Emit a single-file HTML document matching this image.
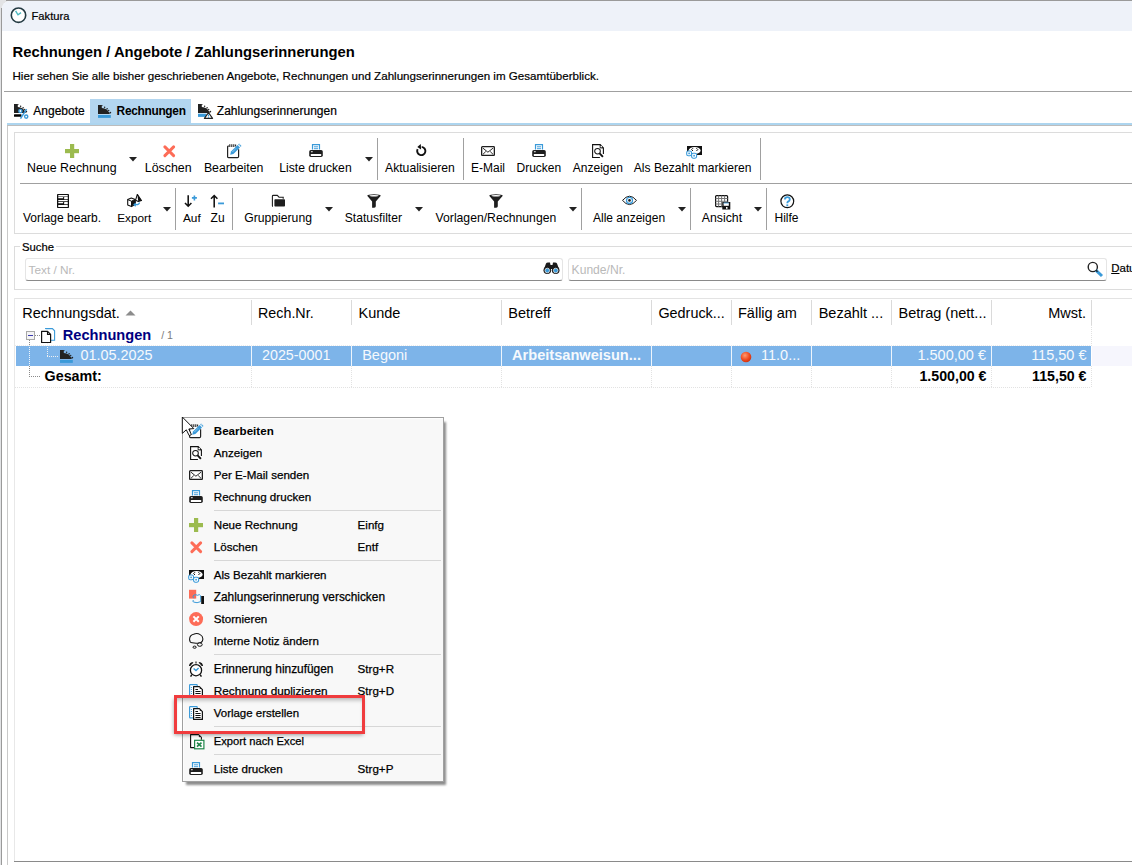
<!DOCTYPE html>
<html><head><meta charset="utf-8"><style>
html,body{margin:0;padding:0;width:1132px;height:865px;overflow:hidden;background:#fff}
body{position:relative;font-family:"Liberation Sans",sans-serif}
.a{position:absolute;display:block}
.t{position:absolute;white-space:nowrap;font-family:"Liberation Sans",sans-serif}
</style></head><body>
<div class="a" style="left:0px;top:0px;width:1132px;height:865px;background:#e2e3e5"></div>
<div class="a" style="left:2px;top:1px;width:1130px;height:864px;background:#fff;border-top-left-radius:8px"></div>
<div class="a" style="left:2px;top:1px;width:1130px;height:30px;background:#eef2f9;border-top-left-radius:8px"></div>
<div class="a" style="left:1px;top:8px;width:1px;height:857px;background:#9a9a9a"></div>
<div class="a" style="left:6px;top:0px;width:1126px;height:1px;background:#9a9a9a"></div>
<svg class="a" style="left:10px;top:7px" width="17" height="17" viewBox="0 0 17 17"><circle cx="8.5" cy="8.2" r="7.2" fill="#fff" stroke="#233a42" stroke-width="1.6"/><path d="M5.6 3.8 L8 7.8 L11 5.6" fill="none" stroke="#4bb8c0" stroke-width="1.4"/></svg>
<div class="t" style="left:31.5px;top:11px;font-size:11.2px;line-height:11.2px;font-weight:400;color:#000;-webkit-text-stroke:0.2px #000">Faktura</div>
<div class="t" style="left:12.5px;top:45px;font-size:14.8px;line-height:14.8px;font-weight:700;color:#000;">Rechnungen / Angebote / Zahlungserinnerungen</div>
<div class="t" style="left:12.5px;top:70px;font-size:11.6px;line-height:11.6px;font-weight:400;color:#000;-webkit-text-stroke:0.2px #000">Hier sehen Sie alle bisher geschriebenen Angebote, Rechnungen und Zahlungserinnerungen im Gesamtüberblick.</div>
<div class="a" style="left:4px;top:91px;width:1128px;height:1px;background:#a0a0a0"></div>
<div class="a" style="left:90px;top:99px;width:101px;height:24px;background:#b3d6f0"></div>
<div class="a" style="left:7px;top:123px;width:1125px;height:2px;background:#add5ef"></div>
<div class="a" style="left:7px;top:125px;width:1125px;height:1px;background:#bdbdbd"></div>
<svg class="a" style="left:14px;top:104px" width="16" height="16" viewBox="0 0 16 16"><path d="M0 0 H4.6 Q5 0 5 0.5 H3.8 V3.1 Q9.6 3.4 11.9 8.9 H0 Z" fill="#222"/><circle cx="6.6" cy="2.3" r="0.75" fill="#222"/><circle cx="9.1" cy="3.7" r="0.75" fill="#222"/><circle cx="10.7" cy="5.4" r="0.7" fill="#222"/><circle cx="12.3" cy="7.6" r="0.9" fill="#222"/><rect x="0" y="10.2" width="7.5" height="2.6" rx="0.5" fill="#000"/><circle cx="6.4" cy="7" r="1.6" fill="#fff" stroke="#3a9ad9" stroke-width="1.4"/><circle cx="12.2" cy="12.6" r="1.6" fill="#fff" stroke="#3a9ad9" stroke-width="1.4"/><path d="M12.6 5.2 L6.5 14.6" stroke="#3a9ad9" stroke-width="1.5"/></svg>
<div class="t" style="left:33.3px;top:105px;font-size:12px;line-height:12px;font-weight:400;color:#000;-webkit-text-stroke:0.2px #000">Angebote</div>
<svg class="a" style="left:98px;top:105px" width="14" height="14" viewBox="0 0 14 14"><path d="M0 0 H4.6 Q5 0 5 0.5 H3.8 V3.1 Q9.6 3.4 11.9 8.9 H0 Z" fill="#222"/><circle cx="6.6" cy="2.3" r="0.75" fill="#222"/><circle cx="9.1" cy="3.7" r="0.75" fill="#222"/><circle cx="10.7" cy="5.4" r="0.7" fill="#222"/><circle cx="12.3" cy="7.6" r="0.9" fill="#222"/><rect x="0" y="10" width="12.8" height="2.9" fill="#3a9ad9"/></svg>
<div class="t" style="left:116.6px;top:106px;font-size:11.9px;line-height:11.9px;font-weight:700;color:#000;letter-spacing:-0.3px">Rechnungen</div>
<svg class="a" style="left:198px;top:104px" width="16" height="16" viewBox="0 0 16 16"><path d="M0 0 H4.6 Q5 0 5 0.5 H3.8 V3.1 Q9.6 3.4 11.9 8.9 H0 Z" fill="#222"/><circle cx="6.6" cy="2.3" r="0.75" fill="#222"/><circle cx="9.1" cy="3.7" r="0.75" fill="#222"/><circle cx="10.7" cy="5.4" r="0.7" fill="#222"/><circle cx="12.3" cy="7.6" r="0.9" fill="#222"/><rect x="0" y="9.7" width="8.5" height="3.2" fill="#3a9ad9"/><path d="M10.5 8.6 L14.6 14.4 L6.4 14.4 Z" fill="#fff" stroke="#222" stroke-width="1.1" stroke-linejoin="round"/><path d="M10.5 10.4 V12.4 M10.5 13 V13.8" stroke="#3a9ad9" stroke-width="1.1"/></svg>
<div class="t" style="left:216.8px;top:105px;font-size:12px;line-height:12px;font-weight:400;color:#000;-webkit-text-stroke:0.2px #000">Zahlungserinnerungen</div>
<div class="a" style="left:7px;top:126px;width:1px;height:739px;background:#c9c9c9"></div>
<div class="a" style="left:14px;top:132px;width:1118px;height:102px;border:1px solid #dcdcdc;border-right:none;box-sizing:border-box;background:#fff"></div>
<div class="a" style="left:20px;top:183px;width:1112px;height:1px;background:#a0a0a0"></div>
<svg class="a" style="left:65px;top:144px" width="14" height="14" viewBox="0 0 14 14"><rect x="5" y="0" width="4.2" height="14" fill="#9cbb4f"/><rect x="0" y="5" width="14" height="4.2" fill="#9cbb4f"/></svg>
<div class="t" style="left:27.0px;top:162px;font-size:12.4px;line-height:12.4px;font-weight:400;color:#000;">Neue Rechnung</div>
<svg class="a" style="left:129px;top:157px" width="8" height="5" viewBox="0 0 8 5"><path d="M0 0 L8 0 L4 4.5 Z" fill="#222"/></svg>
<svg class="a" style="left:163px;top:145px" width="13" height="13" viewBox="0 0 13 13"><path d="M1.9 1.9 L10.6 10.6 M10.6 1.9 L1.9 10.6" stroke="#fd6c57" stroke-width="2.9" stroke-linecap="round"/></svg>
<div class="t" style="left:144.8px;top:162px;font-size:12.4px;line-height:12.4px;font-weight:400;color:#000;">Löschen</div>
<svg class="a" style="left:227px;top:143px" width="15" height="16" viewBox="0 0 15 16"><path d="M11.6 6.3 V13.5 Q11.6 14.6 10.5 14.6 H1.6 Q0.6 14.6 0.6 13.5 V4.1 Q0.6 3 1.7 3 H2" fill="#fff" stroke="#222" stroke-width="1.2"/><path d="M2.8 1.3 V4 M4.8 1.3 V4 M6.8 1.3 V4 M8.6 1.6 V3.6" stroke="#222" stroke-width="1.1"/><path d="M3.2 11.8 L4 8.6 L10.6 2 L13 4.4 L6.4 11 Z" fill="#3a9ad9"/><path d="M11.2 1.4 L12.1 0.5 L14.5 2.9 L13.6 3.8 Z" fill="#3a9ad9"/><path d="M5.6 8.8 L9.4 5" stroke="#fff" stroke-width="0.7" stroke-dasharray="0.9 0.8"/><rect x="12.2" y="1.5" width="1" height="1" fill="#fff" transform="rotate(45 12.7 2)"/></svg>
<div class="t" style="left:203.9px;top:162px;font-size:12.3px;line-height:12.3px;font-weight:400;color:#000;">Bearbeiten</div>
<svg class="a" style="left:309px;top:144px" width="14" height="14" viewBox="0 0 14 14"><path d="M3.5 5.6 V0.6 H10.5 V5.6" fill="#fff" stroke="#3a9ad9" stroke-width="1.15"/><path d="M5.3 2.8 H8.7 M5.3 4.7 H8.7" stroke="#3a9ad9" stroke-width="0.95" stroke-linecap="round"/><rect x="0.2" y="6" width="13.6" height="6.9" rx="1.7" fill="#1e1e1e"/><rect x="1.8" y="9.9" width="10.4" height="2.2" rx="0.6" fill="#fff"/><rect x="1.9" y="7.2" width="1.9" height="1" rx="0.4" fill="#fff"/></svg>
<div class="t" style="left:279.2px;top:162px;font-size:12.2px;line-height:12.2px;font-weight:400;color:#000;">Liste drucken</div>
<svg class="a" style="left:365px;top:157px" width="8" height="5" viewBox="0 0 8 5"><path d="M0 0 L8 0 L4 4.5 Z" fill="#222"/></svg>
<div class="a" style="left:377px;top:138px;width:1px;height:42px;background:#a0a0a0"></div>
<svg class="a" style="left:415px;top:143px" width="12" height="14" viewBox="0 0 12 14"><path d="M6.7 3.9 A4.1 4.1 0 1 1 2.6 6.2" fill="none" stroke="#111" stroke-width="1.9"/><path d="M2.3 3.9 L5.8 1 L6.1 6.6 Z" fill="#111"/></svg>
<div class="t" style="left:385.0px;top:162px;font-size:12.2px;line-height:12.2px;font-weight:400;color:#000;">Aktualisieren</div>
<div class="a" style="left:463px;top:138px;width:1px;height:42px;background:#a0a0a0"></div>
<svg class="a" style="left:481px;top:146px" width="14" height="10" viewBox="0 0 14 10"><rect x="0.65" y="0.65" width="12.7" height="8.8" rx="0.8" fill="#fff" stroke="#1e1e1e" stroke-width="1.3"/><path d="M1.9 2.1 L6.9 6.2 L12.1 2.1 M1.9 8.4 L4.8 5.5 M12.1 8.4 L9.2 5.5" fill="none" stroke="#1e1e1e" stroke-width="0.95"/></svg>
<div class="t" style="left:471.0px;top:162px;font-size:12px;line-height:12px;font-weight:400;color:#000;">E-Mail</div>
<svg class="a" style="left:532px;top:144px" width="14" height="14" viewBox="0 0 14 14"><path d="M3.5 5.6 V0.6 H10.5 V5.6" fill="#fff" stroke="#3a9ad9" stroke-width="1.15"/><path d="M5.3 2.8 H8.7 M5.3 4.7 H8.7" stroke="#3a9ad9" stroke-width="0.95" stroke-linecap="round"/><rect x="0.2" y="6" width="13.6" height="6.9" rx="1.7" fill="#1e1e1e"/><rect x="1.8" y="9.9" width="10.4" height="2.2" rx="0.6" fill="#fff"/><rect x="1.9" y="7.2" width="1.9" height="1" rx="0.4" fill="#fff"/></svg>
<div class="t" style="left:516.5px;top:162px;font-size:12px;line-height:12px;font-weight:400;color:#000;">Drucken</div>
<svg class="a" style="left:592px;top:144px" width="13" height="14" viewBox="0 0 13 14"><path d="M11.4 10 V4 L8.2 0.6 H0.6 V13.5 H7.9" fill="#fff" stroke="#111" stroke-width="1.1"/><path d="M8.2 0.8 V3.9 H11.3" fill="none" stroke="#111" stroke-width="1"/><circle cx="9.3" cy="2.4" r="0.7" fill="#fff"/><circle cx="5.5" cy="7.2" r="2.8" fill="#fff" stroke="#111" stroke-width="1.05"/><path d="M7.6 9.3 L10.9 12.8" stroke="#111" stroke-width="1.9"/></svg>
<div class="t" style="left:572.8px;top:162px;font-size:12px;line-height:12px;font-weight:400;color:#000;">Anzeigen</div>
<svg class="a" style="left:686px;top:146px" width="17" height="13" viewBox="0 0 17 13"><rect x="1" y="0" width="15" height="9" fill="#111"/><ellipse cx="8.6" cy="4.5" rx="6" ry="3.6" fill="#fff"/><path d="M7 2.2 L5.6 3.6 L7 5 M10.4 2.2 L11.8 3.6 L10.4 5" fill="none" stroke="#111" stroke-width="1"/><rect x="0.7" y="5" width="4.8" height="4.8" rx="1.6" fill="#fff" stroke="#3a9ad9" stroke-width="1.1"/><rect x="2.3" y="6.6" width="1.6" height="1.6" fill="#3a9ad9"/><rect x="5.6" y="7.2" width="5" height="5" rx="1.6" fill="#fff" stroke="#3a9ad9" stroke-width="1.1"/><rect x="7.3" y="8.9" width="1.6" height="1.6" fill="#3a9ad9"/></svg>
<div class="t" style="left:633.8px;top:162px;font-size:12.1px;line-height:12.1px;font-weight:400;color:#000;">Als Bezahlt markieren</div>
<div class="a" style="left:760px;top:138px;width:1px;height:42px;background:#a0a0a0"></div>
<svg class="a" style="left:57px;top:194px" width="12" height="14" viewBox="0 0 12 14"><rect x="0" y="0" width="12" height="14" rx="0.8" fill="#111"/><rect x="1.2" y="1.1" width="9.6" height="1.3" rx="0.5" fill="#fff"/><rect x="1.2" y="3.1" width="5" height="1.2" rx="0.5" fill="#fff"/><rect x="7.1" y="3.1" width="3.7" height="2.2" rx="0.5" fill="#fff"/><rect x="1.2" y="6.1" width="9.6" height="1.2" rx="0.5" fill="#fff"/><rect x="1.2" y="8.1" width="5" height="1.2" rx="0.5" fill="#fff"/><rect x="7.1" y="8.1" width="3.7" height="2.2" rx="0.5" fill="#fff"/><rect x="1.2" y="11" width="9.6" height="2" rx="0.5" fill="#fff"/></svg>
<div class="t" style="left:23.0px;top:212px;font-size:12px;line-height:12px;font-weight:400;color:#000;">Vorlage bearb.</div>
<svg class="a" style="left:127px;top:194px" width="16" height="15" viewBox="0 0 16 15"><path d="M0.7 5.6 L4.3 4 L8.3 5.4 V10.3 L4.5 12.6 L0.7 11 Z" fill="#fff" stroke="#111" stroke-width="1.1" stroke-linejoin="round"/><path d="M0.7 5.6 L4.5 7.2 L8.3 5.4 M4.5 7.2 V12.6" fill="none" stroke="#111" stroke-width="1"/><path d="M4.5 7.2 L8.3 5.4 V10.3 L4.5 12.6 Z" fill="#111"/><path d="M10.3 0.3 L14.5 6.6 L11.3 7.5 L8.6 6.2 Z" fill="#fff" stroke="#111" stroke-width="1.05" stroke-linejoin="round"/><path d="M10.3 0.3 L14.5 6.6 L11.3 7.5 Z" fill="#111"/><path d="M12.4 8.4 Q12.4 10.6 9.2 10.7 H7.2 M8.7 9.1 L7 10.7 L8.7 12.3" fill="none" stroke="#3a9ad9" stroke-width="1.2"/></svg>
<div class="t" style="left:117.2px;top:213px;font-size:11.8px;line-height:11.8px;font-weight:400;color:#000;">Export</div>
<svg class="a" style="left:163px;top:207px" width="8" height="5" viewBox="0 0 8 5"><path d="M0 0 L8 0 L4 4.5 Z" fill="#222"/></svg>
<div class="a" style="left:175px;top:188px;width:1px;height:42px;background:#a0a0a0"></div>
<svg class="a" style="left:184px;top:195px" width="16" height="13" viewBox="0 0 16 13"><path d="M4.2 0.2 V11 M1 8 L4.2 11.2 L7.4 8" fill="none" stroke="#111" stroke-width="1.55"/><path d="M10.4 0.4 V5.4 M7.9 2.9 H12.9" stroke="#3a9ad9" stroke-width="1.6"/></svg>
<div class="t" style="left:183.0px;top:213px;font-size:11.8px;line-height:11.8px;font-weight:400;color:#000;">Auf</div>
<svg class="a" style="left:210px;top:194px" width="16" height="14" viewBox="0 0 16 14"><path d="M4.2 13.6 V1.5 M1 4.7 L4.2 1.5 L7.4 4.7" fill="none" stroke="#111" stroke-width="1.55"/><path d="M8.1 9.4 H14" stroke="#3a9ad9" stroke-width="1.8"/></svg>
<div class="t" style="left:210.6px;top:212px;font-size:12px;line-height:12px;font-weight:400;color:#000;">Zu</div>
<div class="a" style="left:232px;top:188px;width:1px;height:42px;background:#a0a0a0"></div>
<svg class="a" style="left:271px;top:194px" width="16" height="14" viewBox="0 0 16 14"><path d="M2 12.4 Q1.4 12.4 1.4 11.6 V2.3 Q1.4 1.4 2.3 1.4 H6.3 L8 3.2 H12.2 V4.7" fill="none" stroke="#1e1e1e" stroke-width="1.1"/><rect x="3.4" y="5.2" width="10.6" height="7.4" rx="0.8" fill="#1e1e1e"/></svg>
<div class="t" style="left:244.2px;top:212px;font-size:12.2px;line-height:12.2px;font-weight:400;color:#000;">Gruppierung</div>
<svg class="a" style="left:325px;top:207px" width="8" height="5" viewBox="0 0 8 5"><path d="M0 0 L8 0 L4 4.5 Z" fill="#222"/></svg>
<svg class="a" style="left:367px;top:194px" width="14" height="14" viewBox="0 0 14 14"><path d="M0.2 1.8 Q0.2 0.2 7 0.2 Q13.8 0.2 13.8 1.8 L8.8 7.6 V12.2 Q8.8 13.4 7.2 13.8 L5.1 13.8 V7.6 Z" fill="#1e1e1e"/><ellipse cx="7" cy="1.7" rx="4.6" ry="0.75" fill="#fff"/></svg>
<div class="t" style="left:344.8px;top:212px;font-size:12.1px;line-height:12.1px;font-weight:400;color:#000;">Statusfilter</div>
<svg class="a" style="left:415px;top:207px" width="8" height="5" viewBox="0 0 8 5"><path d="M0 0 L8 0 L4 4.5 Z" fill="#222"/></svg>
<svg class="a" style="left:489px;top:194px" width="14" height="14" viewBox="0 0 14 14"><path d="M0.2 1.8 Q0.2 0.2 7 0.2 Q13.8 0.2 13.8 1.8 L8.8 7.6 V12.2 Q8.8 13.4 7.2 13.8 L5.1 13.8 V7.6 Z" fill="#1e1e1e"/><ellipse cx="7" cy="1.7" rx="4.6" ry="0.75" fill="#fff"/></svg>
<div class="t" style="left:435.6px;top:212px;font-size:12.2px;line-height:12.2px;font-weight:400;color:#000;">Vorlagen/Rechnungen</div>
<svg class="a" style="left:569px;top:207px" width="8" height="5" viewBox="0 0 8 5"><path d="M0 0 L8 0 L4 4.5 Z" fill="#222"/></svg>
<div class="a" style="left:581px;top:188px;width:1px;height:42px;background:#a0a0a0"></div>
<svg class="a" style="left:622px;top:195px" width="15" height="11" viewBox="0 0 15 11"><path d="M0.5 5.4 Q7.5 -3 14.5 5.4 Q7.5 13.8 0.5 5.4 Z" fill="#fff" stroke="#1e1e1e" stroke-width="1"/><circle cx="7.5" cy="5.4" r="3" fill="none" stroke="#3a9ad9" stroke-width="1.3"/><circle cx="7.5" cy="5.4" r="1.3" fill="#1e1e1e"/></svg>
<div class="t" style="left:593.0px;top:212px;font-size:12px;line-height:12px;font-weight:400;color:#000;">Alle anzeigen</div>
<svg class="a" style="left:678px;top:207px" width="8" height="5" viewBox="0 0 8 5"><path d="M0 0 L8 0 L4 4.5 Z" fill="#222"/></svg>
<div class="a" style="left:690px;top:188px;width:1px;height:42px;background:#a0a0a0"></div>
<svg class="a" style="left:715px;top:195px" width="16" height="15" viewBox="0 0 16 15"><rect x="0.6" y="0.6" width="12" height="11" rx="1" fill="#fff" stroke="#111" stroke-width="1.2"/><path d="M0.6 3.5 H12.6 M0.6 6.3 H12.6 M0.6 9 H12.6 M3.6 0.6 V11.6 M6.6 0.6 V11.6 M9.6 0.6 V11.6" stroke="#777" stroke-width="1"/><rect x="7.3" y="7" width="8" height="7.5" fill="#111"/><rect x="8.6" y="7.8" width="5.2" height="3" fill="#fff"/><rect x="8.6" y="7.6" width="5.2" height="0.8" fill="#3a9ad9"/><rect x="11" y="12" width="1.5" height="1.8" fill="#fff"/></svg>
<div class="t" style="left:701.8px;top:212px;font-size:12.3px;line-height:12.3px;font-weight:400;color:#000;">Ansicht</div>
<svg class="a" style="left:754px;top:207px" width="8" height="5" viewBox="0 0 8 5"><path d="M0 0 L8 0 L4 4.5 Z" fill="#222"/></svg>
<div class="a" style="left:766px;top:188px;width:1px;height:42px;background:#a0a0a0"></div>
<svg class="a" style="left:780px;top:194px" width="15" height="15" viewBox="0 0 15 15"><circle cx="7.3" cy="7.3" r="6.4" fill="#fff" stroke="#111" stroke-width="1.2"/><path d="M4.9 5.6 Q4.9 3.2 7.3 3.2 Q9.8 3.2 9.8 5.4 Q9.8 6.8 8 7.6 Q7.3 8 7.3 9.3" fill="none" stroke="#3a9ad9" stroke-width="1.8"/><rect x="6.4" y="10.4" width="1.8" height="1.8" fill="#3a9ad9"/></svg>
<div class="t" style="left:774.5px;top:212px;font-size:12px;line-height:12px;font-weight:400;color:#000;">Hilfe</div>
<div class="a" style="left:14px;top:246px;width:1118px;height:44px;border:1px solid #dcdcdc;border-right:none;box-sizing:border-box"></div>
<div class="a" style="left:20px;top:240px;width:36px;height:12px;background:#fff"></div>
<div class="t" style="left:22.0px;top:242px;font-size:11.3px;line-height:11.3px;font-weight:400;color:#000;-webkit-text-stroke:0.2px #000">Suche</div>
<div class="a" style="left:25px;top:258px;width:538px;height:23px;border:1px solid #e5e5e5;border-bottom:1px solid #8a8a8a;border-radius:3px;box-sizing:border-box;background:#fff"></div>
<div class="t" style="left:28.6px;top:265px;font-size:11.8px;line-height:11.8px;font-weight:400;color:#b9b9b9;">Text / Nr.</div>
<svg class="a" style="left:543px;top:262px" width="17" height="13" viewBox="0 0 17 13"><path d="M3 1.5 Q3.5 0.5 5 0.5 L7 0.5 L7.5 3 L9.5 3 L10 0.5 L12 0.5 Q13.5 0.5 14 1.5 L16 7 L1 7 Z" fill="#1a1a1a"/><circle cx="4.3" cy="8.3" r="3.8" fill="#1a1a1a"/><circle cx="12.7" cy="8.3" r="3.8" fill="#1a1a1a"/><circle cx="4.3" cy="8.5" r="2.3" fill="#3a9ad9"/><circle cx="12.7" cy="8.5" r="2.3" fill="#3a9ad9"/><circle cx="4.3" cy="8.5" r="2.3" fill="none" stroke="#fff" stroke-width="0.7"/><circle cx="12.7" cy="8.5" r="2.3" fill="none" stroke="#fff" stroke-width="0.7"/></svg>
<div class="a" style="left:568px;top:258px;width:539px;height:23px;border:1px solid #e5e5e5;border-bottom:1px solid #8a8a8a;border-radius:3px;box-sizing:border-box;background:#fff"></div>
<div class="t" style="left:571.6px;top:264px;font-size:12.1px;line-height:12.1px;font-weight:400;color:#b9b9b9;">Kunde/Nr.</div>
<svg class="a" style="left:1087px;top:261px" width="17" height="17" viewBox="0 0 17 17"><circle cx="5.8" cy="6" r="4.6" fill="none" stroke="#222" stroke-width="1.4"/><path d="M9 9.3 L15 15" stroke="#3a9ad9" stroke-width="3"/><path d="M9 9.3 L10.5 10.8" stroke="#222" stroke-width="1.4"/></svg>
<div class="t" style="left:1111.2px;top:263px;font-size:11.5px;line-height:11.5px;font-weight:400;color:#000;-webkit-text-stroke:0.2px #000"><span style="text-decoration:underline">D</span>atum</div>
<div class="a" style="left:14px;top:298px;width:1118px;height:1px;background:#e3e3e3"></div>
<div class="a" style="left:14px;top:298px;width:1px;height:564px;background:#e8e8e8"></div>
<div class="a" style="left:14px;top:861px;width:1118px;height:1px;background:#8a8a8a"></div>
<div class="a" style="left:251px;top:300px;width:1px;height:25px;background:#dadada"></div>
<div class="a" style="left:351px;top:300px;width:1px;height:25px;background:#dadada"></div>
<div class="a" style="left:501px;top:300px;width:1px;height:25px;background:#dadada"></div>
<div class="a" style="left:651px;top:300px;width:1px;height:25px;background:#dadada"></div>
<div class="a" style="left:731px;top:300px;width:1px;height:25px;background:#dadada"></div>
<div class="a" style="left:811px;top:300px;width:1px;height:25px;background:#dadada"></div>
<div class="a" style="left:891px;top:300px;width:1px;height:25px;background:#dadada"></div>
<div class="a" style="left:991px;top:300px;width:1px;height:25px;background:#dadada"></div>
<div class="a" style="left:1091px;top:300px;width:1px;height:25px;background:#dadada"></div>
<div class="t" style="left:22.3px;top:306px;font-size:14.5px;line-height:14.5px;font-weight:400;color:#000;">Rechnungsdat.</div>
<svg class="a" style="left:125px;top:310px" width="11" height="6" viewBox="0 0 11 6"><path d="M0.5 5.5 L5.5 0.5 L10.5 5.5 Z" fill="#8c8c8c"/></svg>
<div class="t" style="left:258.0px;top:306px;font-size:14.3px;line-height:14.3px;font-weight:400;color:#000;">Rech.Nr.</div>
<div class="t" style="left:358.5px;top:306px;font-size:14.5px;line-height:14.5px;font-weight:400;color:#000;">Kunde</div>
<div class="t" style="left:508.3px;top:306px;font-size:14.5px;line-height:14.5px;font-weight:400;color:#000;">Betreff</div>
<div class="t" style="left:658.4px;top:306px;font-size:14.4px;line-height:14.4px;font-weight:400;color:#000;">Gedruck...</div>
<div class="t" style="left:738.0px;top:306px;font-size:14.5px;line-height:14.5px;font-weight:400;color:#000;">Fällig am</div>
<div class="t" style="left:818.7px;top:306px;font-size:14.5px;line-height:14.5px;font-weight:400;color:#000;">Bezahlt ...</div>
<div class="t" style="left:898.6px;top:306px;font-size:14.5px;line-height:14.5px;font-weight:400;color:#000;">Betrag (nett...</div>
<div class="t" style="left:886px;width:200px;text-align:right;top:306px;font-size:14.5px;line-height:14.5px;font-weight:400;color:#000">Mwst.</div>
<div class="a" style="left:251px;top:366px;width:1px;height:21px;background-image:linear-gradient(#e2e2e2 50%, transparent 50%);background-size:1px 2px"></div>
<div class="a" style="left:351px;top:366px;width:1px;height:21px;background-image:linear-gradient(#e2e2e2 50%, transparent 50%);background-size:1px 2px"></div>
<div class="a" style="left:501px;top:366px;width:1px;height:21px;background-image:linear-gradient(#e2e2e2 50%, transparent 50%);background-size:1px 2px"></div>
<div class="a" style="left:651px;top:366px;width:1px;height:21px;background-image:linear-gradient(#e2e2e2 50%, transparent 50%);background-size:1px 2px"></div>
<div class="a" style="left:731px;top:366px;width:1px;height:21px;background-image:linear-gradient(#e2e2e2 50%, transparent 50%);background-size:1px 2px"></div>
<div class="a" style="left:811px;top:366px;width:1px;height:21px;background-image:linear-gradient(#e2e2e2 50%, transparent 50%);background-size:1px 2px"></div>
<div class="a" style="left:891px;top:366px;width:1px;height:21px;background-image:linear-gradient(#e2e2e2 50%, transparent 50%);background-size:1px 2px"></div>
<div class="a" style="left:991px;top:366px;width:1px;height:21px;background-image:linear-gradient(#e2e2e2 50%, transparent 50%);background-size:1px 2px"></div>
<div class="a" style="left:1091px;top:366px;width:1px;height:21px;background-image:linear-gradient(#e2e2e2 50%, transparent 50%);background-size:1px 2px"></div>
<div class="a" style="left:15px;top:387px;width:1076px;height:1px;background-image:linear-gradient(90deg,#e2e2e2 50%, transparent 50%);background-size:2px 1px"></div>
<div class="a" style="left:15px;top:345px;width:1076px;height:1px;background-image:linear-gradient(90deg,#ebebeb 50%, transparent 50%);background-size:2px 1px"></div>
<div class="a" style="left:16px;top:346px;width:1075px;height:20px;background:#7db4e9"></div>
<div class="a" style="left:1092px;top:346px;width:40px;height:20px;background:#f6f6fd"></div>
<div class="a" style="left:1091px;top:325px;width:1px;height:21px;background-image:linear-gradient(#e2e2e2 50%, transparent 50%);background-size:1px 2px"></div>
<div class="a" style="left:251px;top:346px;width:1px;height:20px;background:#eef5fc"></div>
<div class="a" style="left:351px;top:346px;width:1px;height:20px;background:#eef5fc"></div>
<div class="a" style="left:501px;top:346px;width:1px;height:20px;background:#eef5fc"></div>
<div class="a" style="left:651px;top:346px;width:1px;height:20px;background:#eef5fc"></div>
<div class="a" style="left:731px;top:346px;width:1px;height:20px;background:#eef5fc"></div>
<div class="a" style="left:811px;top:346px;width:1px;height:20px;background:#eef5fc"></div>
<div class="a" style="left:891px;top:346px;width:1px;height:20px;background:#eef5fc"></div>
<div class="a" style="left:991px;top:346px;width:1px;height:20px;background:#eef5fc"></div>
<div class="a" style="left:29px;top:340px;width:1px;height:37px;background-image:linear-gradient(#8a8a8a 50%, transparent 50%);background-size:1px 2px"></div>
<div class="a" style="left:29px;top:346px;width:1px;height:20px;background-image:linear-gradient(#7db4e9 50%, #f2f7fc 50%);background-size:1px 2px"></div>
<div class="a" style="left:29px;top:376px;width:11px;height:1px;background-image:linear-gradient(90deg,#8a8a8a 50%, transparent 50%);background-size:2px 1px"></div>
<div class="a" style="left:35px;top:335px;width:6px;height:1px;background-image:linear-gradient(90deg,#8a8a8a 50%, transparent 50%);background-size:2px 1px"></div>
<div class="a" style="left:47px;top:343px;width:1px;height:14px;background-image:linear-gradient(#f0f0f0 50%, transparent 50%);background-size:1px 2px"></div>
<div class="a" style="left:47px;top:356px;width:12px;height:1px;background-image:linear-gradient(90deg,#f0f0f0 50%, transparent 50%);background-size:2px 1px"></div>
<svg class="a" style="left:26px;top:331px" width="9" height="9" viewBox="0 0 9 9"><rect x="0.5" y="0.5" width="8" height="8" fill="#f4f4f4" stroke="#a8a8a8"/><path d="M2 4.5 H7" stroke="#3b3bb0" stroke-width="1"/></svg>
<svg class="a" style="left:41px;top:328px" width="15" height="16" viewBox="0 0 15 16"><path d="M4.6 1 V0.6 H11.4 L13.6 2.8 V12.3 H10" fill="#fff" stroke="#3a9ad9" stroke-width="1.1"/><path d="M0.6 3.3 H6.6 L9.6 6.3 V14.5 H0.6 Z" fill="#fff" stroke="#111" stroke-width="1.2" stroke-linejoin="round"/><path d="M6.5 3.4 V6.4 H9.5" fill="none" stroke="#111" stroke-width="1.1"/></svg>
<div class="t" style="left:62.8px;top:328px;font-size:14.6px;line-height:14.6px;font-weight:700;color:#000080;">Rechnungen</div>
<div class="t" style="left:161.2px;top:330px;font-size:10.6px;line-height:10.6px;font-weight:400;color:#7a7a7a;">/ 1</div>
<svg class="a" style="left:60px;top:350px" width="14" height="15" viewBox="0 0 14 15"><path d="M0 0 H4.6 Q5 0 5 0.5 H3.8 V3.1 Q9.6 3.4 11.9 8.9 H0 Z" fill="#222"/><circle cx="6.6" cy="2.3" r="0.75" fill="#222"/><circle cx="9.1" cy="3.7" r="0.75" fill="#222"/><circle cx="10.7" cy="5.4" r="0.7" fill="#222"/><circle cx="12.3" cy="7.6" r="0.9" fill="#222"/><rect x="0" y="10" width="12.8" height="2.9" fill="#3a9ad9"/></svg>
<div class="t" style="left:80.5px;top:348px;font-size:14.4px;line-height:14.4px;font-weight:400;color:#f5f9fd;">01.05.2025</div>
<div class="t" style="left:262.0px;top:348px;font-size:14.3px;line-height:14.3px;font-weight:400;color:#f5f9fd;">2025-0001</div>
<div class="t" style="left:362.2px;top:348px;font-size:14.5px;line-height:14.5px;font-weight:400;color:#f5f9fd;">Begoni</div>
<div class="t" style="left:512.0px;top:348px;font-size:14.6px;line-height:14.6px;font-weight:700;color:#f5f9fd;">Arbeitsanweisun...</div>
<svg class="a" style="left:740px;top:351px" width="12" height="12" viewBox="0 0 12 12"><defs><radialGradient id="rg" cx="0.4" cy="0.35" r="0.7"><stop offset="0" stop-color="#ff9a70"/><stop offset="0.6" stop-color="#f04a20"/><stop offset="1" stop-color="#c83010"/></radialGradient></defs><circle cx="6" cy="6" r="5.3" fill="url(#rg)"/></svg>
<div class="t" style="left:761.0px;top:348px;font-size:14.5px;line-height:14.5px;font-weight:400;color:#f5f9fd;">11.0...</div>
<div class="t" style="left:786px;width:200px;text-align:right;top:348px;font-size:14.5px;line-height:14.5px;font-weight:400;color:#f5f9fd">1.500,00 €</div>
<div class="t" style="left:886.5px;width:200px;text-align:right;top:348px;font-size:14.5px;line-height:14.5px;font-weight:400;color:#f5f9fd">115,50 €</div>
<div class="t" style="left:44.6px;top:369px;font-size:14.3px;line-height:14.3px;font-weight:700;color:#000;">Gesamt:</div>
<div class="t" style="left:786.5px;width:200px;text-align:right;top:369px;font-size:14.2px;line-height:14.2px;font-weight:700;color:#000">1.500,00 €</div>
<div class="t" style="left:886.5px;width:200px;text-align:right;top:369px;font-size:14.2px;line-height:14.2px;font-weight:700;color:#000">115,50 €</div>
<div class="a" style="left:186px;top:422px;width:260px;height:363px;background:rgba(0,0,0,0.45);filter:blur(0.9px)"></div>
<div class="a" style="left:182px;top:417px;width:262px;height:365px;background:#f8f8f8;border:1px solid #a0a0a0;box-sizing:border-box;box-shadow:inset 1px 1px 0 #fdfdfd"></div>
<div class="t" style="left:213.8px;top:425px;font-size:11.6px;line-height:11.6px;font-weight:700;color:#000;">Bearbeiten</div>
<div class="t" style="left:213.8px;top:447px;font-size:11.6px;line-height:11.6px;font-weight:400;color:#000;-webkit-text-stroke:0.25px #000">Anzeigen</div>
<div class="t" style="left:213.8px;top:469px;font-size:11.6px;line-height:11.6px;font-weight:400;color:#000;-webkit-text-stroke:0.25px #000">Per E-Mail senden</div>
<div class="t" style="left:213.8px;top:491px;font-size:11.6px;line-height:11.6px;font-weight:400;color:#000;-webkit-text-stroke:0.25px #000">Rechnung drucken</div>
<div class="t" style="left:213.8px;top:519px;font-size:11.6px;line-height:11.6px;font-weight:400;color:#000;-webkit-text-stroke:0.25px #000">Neue Rechnung</div>
<div class="t" style="left:357.6px;top:519px;font-size:11.6px;line-height:11.6px;font-weight:400;color:#000;-webkit-text-stroke:0.25px #000">Einfg</div>
<div class="t" style="left:213.8px;top:541px;font-size:11.6px;line-height:11.6px;font-weight:400;color:#000;-webkit-text-stroke:0.25px #000">Löschen</div>
<div class="t" style="left:357.6px;top:541px;font-size:11.6px;line-height:11.6px;font-weight:400;color:#000;-webkit-text-stroke:0.25px #000">Entf</div>
<div class="t" style="left:213.8px;top:569px;font-size:11.6px;line-height:11.6px;font-weight:400;color:#000;-webkit-text-stroke:0.25px #000">Als Bezahlt markieren</div>
<div class="t" style="left:213.8px;top:592px;font-size:11.85px;line-height:11.85px;font-weight:400;color:#000;-webkit-text-stroke:0.25px #000">Zahlungserinnerung verschicken</div>
<div class="t" style="left:213.8px;top:613px;font-size:11.6px;line-height:11.6px;font-weight:400;color:#000;-webkit-text-stroke:0.25px #000">Stornieren</div>
<div class="t" style="left:213.8px;top:635px;font-size:11.6px;line-height:11.6px;font-weight:400;color:#000;-webkit-text-stroke:0.25px #000">Interne Notiz ändern</div>
<div class="t" style="left:213.8px;top:664px;font-size:11.9px;line-height:11.9px;font-weight:400;color:#000;-webkit-text-stroke:0.25px #000">Erinnerung hinzufügen</div>
<div class="t" style="left:357.6px;top:663px;font-size:11.6px;line-height:11.6px;font-weight:400;color:#000;-webkit-text-stroke:0.25px #000">Strg+R</div>
<div class="t" style="left:213.8px;top:685px;font-size:11.75px;line-height:11.75px;font-weight:400;color:#000;-webkit-text-stroke:0.25px #000">Rechnung duplizieren</div>
<div class="t" style="left:357.6px;top:685px;font-size:11.6px;line-height:11.6px;font-weight:400;color:#000;-webkit-text-stroke:0.25px #000">Strg+D</div>
<div class="t" style="left:213.8px;top:708px;font-size:11.45px;line-height:11.45px;font-weight:400;color:#000;-webkit-text-stroke:0.25px #000">Vorlage erstellen</div>
<div class="t" style="left:213.8px;top:736px;font-size:11.2px;line-height:11.2px;font-weight:400;color:#000;-webkit-text-stroke:0.25px #000">Export nach Excel</div>
<div class="t" style="left:213.8px;top:763px;font-size:11.6px;line-height:11.6px;font-weight:400;color:#000;-webkit-text-stroke:0.25px #000">Liste drucken</div>
<div class="t" style="left:357.6px;top:763px;font-size:11.6px;line-height:11.6px;font-weight:400;color:#000;-webkit-text-stroke:0.25px #000">Strg+P</div>
<div class="a" style="left:214px;top:510px;width:227px;height:1px;background:#d7d7d7"></div>
<div class="a" style="left:214px;top:560px;width:227px;height:1px;background:#d7d7d7"></div>
<div class="a" style="left:214px;top:654px;width:227px;height:1px;background:#d7d7d7"></div>
<div class="a" style="left:214px;top:726px;width:227px;height:1px;background:#d7d7d7"></div>
<div class="a" style="left:214px;top:754px;width:227px;height:1px;background:#d7d7d7"></div>
<svg class="a" style="left:189px;top:423px" width="15" height="16" viewBox="0 0 15 16"><path d="M11.6 6.3 V13.5 Q11.6 14.6 10.5 14.6 H1.6 Q0.6 14.6 0.6 13.5 V4.1 Q0.6 3 1.7 3 H2" fill="#fff" stroke="#222" stroke-width="1.2"/><path d="M2.8 1.3 V4 M4.8 1.3 V4 M6.8 1.3 V4 M8.6 1.6 V3.6" stroke="#222" stroke-width="1.1"/><path d="M3.2 11.8 L4 8.6 L10.6 2 L13 4.4 L6.4 11 Z" fill="#3a9ad9"/><path d="M11.2 1.4 L12.1 0.5 L14.5 2.9 L13.6 3.8 Z" fill="#3a9ad9"/><path d="M5.6 8.8 L9.4 5" stroke="#fff" stroke-width="0.7" stroke-dasharray="0.9 0.8"/><rect x="12.2" y="1.5" width="1" height="1" fill="#fff" transform="rotate(45 12.7 2)"/></svg>
<svg class="a" style="left:190px;top:446px" width="13" height="14" viewBox="0 0 13 14"><path d="M11.4 10 V4 L8.2 0.6 H0.6 V13.5 H7.9" fill="#fff" stroke="#111" stroke-width="1.1"/><path d="M8.2 0.8 V3.9 H11.3" fill="none" stroke="#111" stroke-width="1"/><circle cx="9.3" cy="2.4" r="0.7" fill="#fff"/><circle cx="5.5" cy="7.2" r="2.8" fill="#fff" stroke="#111" stroke-width="1.05"/><path d="M7.6 9.3 L10.9 12.8" stroke="#111" stroke-width="1.9"/></svg>
<svg class="a" style="left:189px;top:470px" width="14" height="10" viewBox="0 0 14 10"><rect x="0.65" y="0.65" width="12.7" height="8.8" rx="0.8" fill="#fff" stroke="#1e1e1e" stroke-width="1.3"/><path d="M1.9 2.1 L6.9 6.2 L12.1 2.1 M1.9 8.4 L4.8 5.5 M12.1 8.4 L9.2 5.5" fill="none" stroke="#1e1e1e" stroke-width="0.95"/></svg>
<svg class="a" style="left:189px;top:490px" width="14" height="14" viewBox="0 0 14 14"><path d="M3.5 5.6 V0.6 H10.5 V5.6" fill="#fff" stroke="#3a9ad9" stroke-width="1.15"/><path d="M5.3 2.8 H8.7 M5.3 4.7 H8.7" stroke="#3a9ad9" stroke-width="0.95" stroke-linecap="round"/><rect x="0.2" y="6" width="13.6" height="6.9" rx="1.7" fill="#1e1e1e"/><rect x="1.8" y="9.9" width="10.4" height="2.2" rx="0.6" fill="#fff"/><rect x="1.9" y="7.2" width="1.9" height="1" rx="0.4" fill="#fff"/></svg>
<svg class="a" style="left:189px;top:518px" width="14" height="14" viewBox="0 0 14 14"><rect x="5" y="0" width="4.2" height="14" fill="#9cbb4f"/><rect x="0" y="5" width="14" height="4.2" fill="#9cbb4f"/></svg>
<svg class="a" style="left:190px;top:541px" width="13" height="13" viewBox="0 0 13 13"><path d="M1.9 1.9 L10.6 10.6 M10.6 1.9 L1.9 10.6" stroke="#fd6c57" stroke-width="2.9" stroke-linecap="round"/></svg>
<svg class="a" style="left:188px;top:570px" width="17" height="13" viewBox="0 0 17 13"><rect x="1" y="0" width="15" height="9" fill="#111"/><ellipse cx="8.6" cy="4.5" rx="6" ry="3.6" fill="#fff"/><path d="M7 2.2 L5.6 3.6 L7 5 M10.4 2.2 L11.8 3.6 L10.4 5" fill="none" stroke="#111" stroke-width="1"/><rect x="0.7" y="5" width="4.8" height="4.8" rx="1.6" fill="#fff" stroke="#3a9ad9" stroke-width="1.1"/><rect x="2.3" y="6.6" width="1.6" height="1.6" fill="#3a9ad9"/><rect x="5.6" y="7.2" width="5" height="5" rx="1.6" fill="#fff" stroke="#3a9ad9" stroke-width="1.1"/><rect x="7.3" y="8.9" width="1.6" height="1.6" fill="#3a9ad9"/></svg>
<svg class="a" style="left:189px;top:589px" width="16" height="16" viewBox="0 0 16 16"><rect x="0" y="0.8" width="7.2" height="8.8" fill="#fd6c57"/><path d="M5.2 9.2 Q3.6 8.6 4 7.2 Q4.6 5.4 7 5.8 L8.6 6.3 Q10.6 4.6 11.6 6.8 L11.8 12.6 Q8 14.6 4.4 13 Q3.4 12.2 4.4 11" fill="none" stroke="#3a9ad9" stroke-width="1"/><rect x="12.2" y="7" width="2.8" height="8" fill="#111"/></svg>
<svg class="a" style="left:189px;top:612px" width="15" height="15" viewBox="0 0 15 15"><circle cx="7.1" cy="7.1" r="7" fill="#fd6c57"/><path d="M4.4 4.4 L9.8 9.8 M9.8 4.4 L4.4 9.8" stroke="#fff" stroke-width="2"/></svg>
<svg class="a" style="left:189px;top:632px" width="15" height="17" viewBox="0 0 15 17"><path d="M3.3 10.8 Q0.4 10.4 0.6 7 Q0.8 3.2 4.6 2.3 Q8 0.6 11.2 2.6 Q14.2 4.2 13.8 7.6 Q13.4 10.6 10 11 Q6.5 11.6 3.3 10.8 Z" fill="none" stroke="#111" stroke-width="1.05"/><ellipse cx="10.8" cy="12.6" rx="2.4" ry="1.7" fill="#f8f8f8" stroke="#111" stroke-width="1"/><ellipse cx="5.6" cy="15.2" rx="1.6" ry="1.1" fill="none" stroke="#111" stroke-width="1"/></svg>
<svg class="a" style="left:189px;top:661px" width="15" height="17" viewBox="0 0 15 17"><circle cx="7" cy="9.2" r="5.6" fill="#fff" stroke="#111" stroke-width="1.3"/><path d="M0.6 5 Q0.4 1.6 3.8 1.6 Z M13.4 5 Q13.6 1.6 10.2 1.6 Z" fill="#111" stroke="#111" stroke-width="1"/><path d="M7 0.4 V2.6" stroke="#111" stroke-width="1.1"/><path d="M4.6 7.4 L7 9.6 L9.6 7" fill="none" stroke="#3a9ad9" stroke-width="1.4"/><path d="M2.8 13.6 L1.6 15.6 M11.2 13.6 L12.4 15.6" stroke="#111" stroke-width="1.4"/></svg>
<svg class="a" style="left:189px;top:684px" width="15" height="15" viewBox="0 0 15 15"><rect x="0.6" y="0.6" width="7.6" height="11.2" rx="0.6" fill="#fff" stroke="#3a9ad9" stroke-width="1.15"/><path d="M2.4 3 v1 M2.4 5 v1 M2.4 7 v1 M2.4 9 v1" stroke="#3a9ad9" stroke-width="1"/><path d="M4.6 2.6 H10.4 L13.4 5.6 V13.4 H4.6 Z" fill="#fff" stroke="#111" stroke-width="1.2" stroke-linejoin="round"/><circle cx="11.3" cy="4.4" r="0.6" fill="#111"/><path d="M6.4 5.5 H9 M6.4 7.5 H11.6 M6.4 9.5 H11.6 M6.4 11.5 H11.6" stroke="#111" stroke-width="1"/></svg>
<svg class="a" style="left:189px;top:706px" width="15" height="15" viewBox="0 0 15 15"><rect x="0.6" y="0.6" width="7.6" height="11.2" rx="0.6" fill="#fff" stroke="#3a9ad9" stroke-width="1.15"/><path d="M2.4 3 v1 M2.4 5 v1 M2.4 7 v1 M2.4 9 v1" stroke="#3a9ad9" stroke-width="1"/><path d="M4.6 2.6 H10.4 L13.4 5.6 V13.4 H4.6 Z" fill="#fff" stroke="#111" stroke-width="1.2" stroke-linejoin="round"/><circle cx="11.3" cy="4.4" r="0.6" fill="#111"/><path d="M6.4 5.5 H9 M6.4 7.5 H11.6 M6.4 9.5 H11.6 M6.4 11.5 H11.6" stroke="#111" stroke-width="1"/></svg>
<svg class="a" style="left:189px;top:734px" width="16" height="16" viewBox="0 0 16 16"><path d="M5.2 13.6 H1.6 V0.6 H9.6 L12.4 3.4 V5.8" fill="#fff" stroke="#111" stroke-width="1.1" stroke-linejoin="round"/><circle cx="10.4" cy="2.6" r="0.7" fill="#111"/><rect x="5.6" y="6.3" width="9.3" height="8.5" fill="#fff" stroke="#21864a" stroke-width="1.2"/><path d="M8 8.6 L12.5 12.6 M12.5 8.6 L8 12.6" stroke="#21864a" stroke-width="1.6"/></svg>
<svg class="a" style="left:189px;top:762px" width="14" height="14" viewBox="0 0 14 14"><path d="M3.5 5.6 V0.6 H10.5 V5.6" fill="#fff" stroke="#3a9ad9" stroke-width="1.15"/><path d="M5.3 2.8 H8.7 M5.3 4.7 H8.7" stroke="#3a9ad9" stroke-width="0.95" stroke-linecap="round"/><rect x="0.2" y="6" width="13.6" height="6.9" rx="1.7" fill="#1e1e1e"/><rect x="1.8" y="9.9" width="10.4" height="2.2" rx="0.6" fill="#fff"/><rect x="1.9" y="7.2" width="1.9" height="1" rx="0.4" fill="#fff"/></svg>
<div class="a" style="left:175px;top:697px;width:189px;height:36px;box-shadow:-1px 2px 4px rgba(0,0,0,0.38), inset 0 3px 4px rgba(0,0,0,0.28)"></div>
<div class="a" style="left:174px;top:695px;width:191px;height:38.5px;border:3.3px solid #f03c3e;box-sizing:border-box"></div>
<svg class="a" style="left:181px;top:416px" width="14" height="22" viewBox="0 0 14 22"><path d="M1.3 1 L1.3 17.4 L5.3 13.8 L8.2 19.6 L10.4 18.6 L7.8 13 L12.8 12.6 Z" fill="#fff" stroke="#111" stroke-width="1"/></svg>
</body></html>
